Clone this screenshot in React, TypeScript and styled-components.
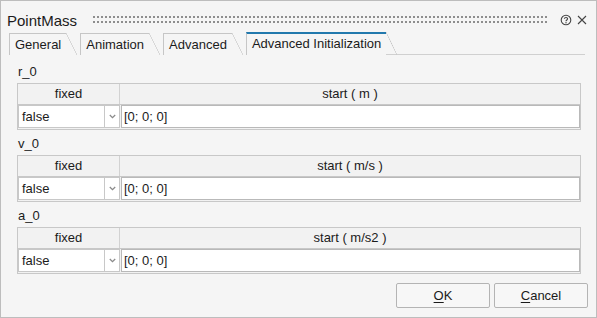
import React from 'react';
import styled, { createGlobalStyle } from 'styled-components';

const GlobalStyle = createGlobalStyle`
    html, body {
        margin: 0;
        padding: 0;
        background: #f5f5f5;
    }
    * {
        box-sizing: border-box;
    }
`

const Window = styled.div`
    width: 597px;
    height: 318px;
    border: 1px solid #bdbdbd;
    background: #f5f5f5;
    font-family: "Liberation Sans", Arial, sans-serif;
    font-size: 13px;
    color: #1b1b1b;
    display: flex;
    flex-direction: column;
`
const TitleBar = styled.div`
    display: flex;
    align-items: center;
    height: 30px;
    padding: 8px 9px 0 6px;
`
const Title = styled.div`
    font-size: 15px;
`
const Grip = styled.div`
    flex: 1;
    height: 8px;
    margin: 0 8px 0 16px;
    background-image: radial-gradient(circle at 1px 1px, #8e8e8e 1px, transparent 1.3px);
    background-size: 4px 5px;
`
const TitleIcon = styled.svg`
    display: block;
    margin-left: 5px;
`
const TabBar = styled.div`
    display: flex;
    align-items: flex-end;
    height: 24px;
    padding-left: 8px;
`
const Tab = styled.div<{ $active?: boolean }>`
    position: relative;
    height: ${p => (p.$active ? '23px' : '22px')};
    line-height: ${p => (p.$active ? '20px' : '21px')};
    padding: 0 5px 0 5px;
    margin-right: 14px;
    border-left: 1px solid #c6c6c6;
    border-top: ${p => (p.$active ? '2px solid #2279ad' : '1px solid #c6c6c6')};
    white-space: nowrap;

    &::after {
        content: '';
        position: absolute;
        left: 100%;
        top: ${p => (p.$active ? '-2px' : '-1px')};
        width: 11px;
        height: ${p => (p.$active ? '23px' : '22px')};
        background: linear-gradient(to top right, transparent calc(50% - 0.6px), #c6c6c6 50%, transparent calc(50% + 0.6px));
    }
`
const TabLine = styled.div`
    flex: 1;
    margin: 0 11px 0 -14px;
    border-bottom: 1px solid #d0d0d0;
`
const Content = styled.div`
    display: flex;
    flex-direction: column;
    gap: 6px;
    padding: 9px 16px 0 16px;
`
const Section = styled.div`
    display: flex;
    flex-direction: column;
    gap: 3px;
`
const Label = styled.div`
    line-height: 16px;
    padding-left: 1px;
`
const Table = styled.div`
    width: 564px;
    border: 1px solid #c8c8c8;
    background: #f2f2f2;
`
const HeaderRow = styled.div`
    display: grid;
    grid-template-columns: 102px 1fr;
    height: 21px;
    border-bottom: 1px solid #c8c8c8;
`
const HeaderCell = styled.div`
    text-align: center;
    line-height: 20px;

    &:first-child {
        border-right: 1px solid #d2d2d2;
    }
`
const DataRow = styled.div`
    display: grid;
    grid-template-columns: 102px 1fr;
    column-gap: 1px;
    height: 24px;
    padding-bottom: 1px;
`
const Select = styled.div`
    display: flex;
    background: #fff;
    border: 1px solid #c8c8c8;
`
const SelectText = styled.div`
    flex: 1;
    line-height: 21px;
    padding-left: 3px;
`
const SelectArrow = styled.div`
    width: 15px;
    border-left: 1px solid #c8c8c8;
    display: flex;
    align-items: center;
    justify-content: center;
`
const ValueInput = styled.div`
    background: #fff;
    border: 1px solid #b9b9b9;
    line-height: 21px;
    padding-left: 2px;
`
const Footer = styled.div`
    display: flex;
    justify-content: flex-end;
    gap: 4px;
    padding: 9px 8px 0 0;
`
const Button = styled.div`
    width: 94px;
    height: 25px;
    border: 1px solid #b4b4b4;
    border-radius: 2px;
    background: #f7f7f7;
    text-align: center;
    line-height: 23px;

    u {
        text-decoration-thickness: 1px;
        text-underline-offset: 2px;
    }
`

const rows = [
    { name: 'r_0', unit: 'm' },
    { name: 'v_0', unit: 'm/s' },
    { name: 'a_0', unit: 'm/s2' },
]

function App(): JSX.Element {
    return (
        <>
            <GlobalStyle />
            <Window>
                <TitleBar>
                    <Title>PointMass</Title>
                    <Grip />
                    <TitleIcon width="12" height="12" viewBox="0 0 12 12">
                        <circle cx="6" cy="6" r="4.8" fill="none" stroke="#444" strokeWidth="1.1" />
                        <path d="M4.4 4.8 C4.4 3.1 7.6 3.1 7.6 4.8 C7.6 6 6 5.9 6 7.2" fill="none" stroke="#444" strokeWidth="1.1" />
                        <circle cx="6" cy="8.8" r="0.7" fill="#444" />
                    </TitleIcon>
                    <TitleIcon width="10" height="10" viewBox="0 0 10 10">
                        <path d="M1 1 L9 9 M9 1 L1 9" stroke="#444" strokeWidth="1.1" />
                    </TitleIcon>
                </TitleBar>
                <TabBar>
                    <Tab>General</Tab>
                    <Tab>Animation</Tab>
                    <Tab>Advanced</Tab>
                    <Tab $active>Advanced Initialization</Tab>
                    <TabLine />
                </TabBar>
                <Content>
                    {rows.map(r => (
                        <Section key={r.name}>
                            <Label>{r.name}</Label>
                            <Table>
                                <HeaderRow>
                                    <HeaderCell>fixed</HeaderCell>
                                    <HeaderCell>start ( {r.unit} )</HeaderCell>
                                </HeaderRow>
                                <DataRow>
                                    <Select>
                                        <SelectText>false</SelectText>
                                        <SelectArrow>
                                            <svg width="7" height="5" viewBox="0 0 7 5">
                                                <path d="M0.8 1 L3.5 3.6 L6.2 1" fill="none" stroke="#8a8a8a" strokeWidth="1.3" />
                                            </svg>
                                        </SelectArrow>
                                    </Select>
                                    <ValueInput>[0; 0; 0]</ValueInput>
                                </DataRow>
                            </Table>
                        </Section>
                    ))}
                </Content>
                <Footer>
                    <Button><u>O</u>K</Button>
                    <Button><u>C</u>ancel</Button>
                </Footer>
            </Window>
        </>
    )
}

export default App;
